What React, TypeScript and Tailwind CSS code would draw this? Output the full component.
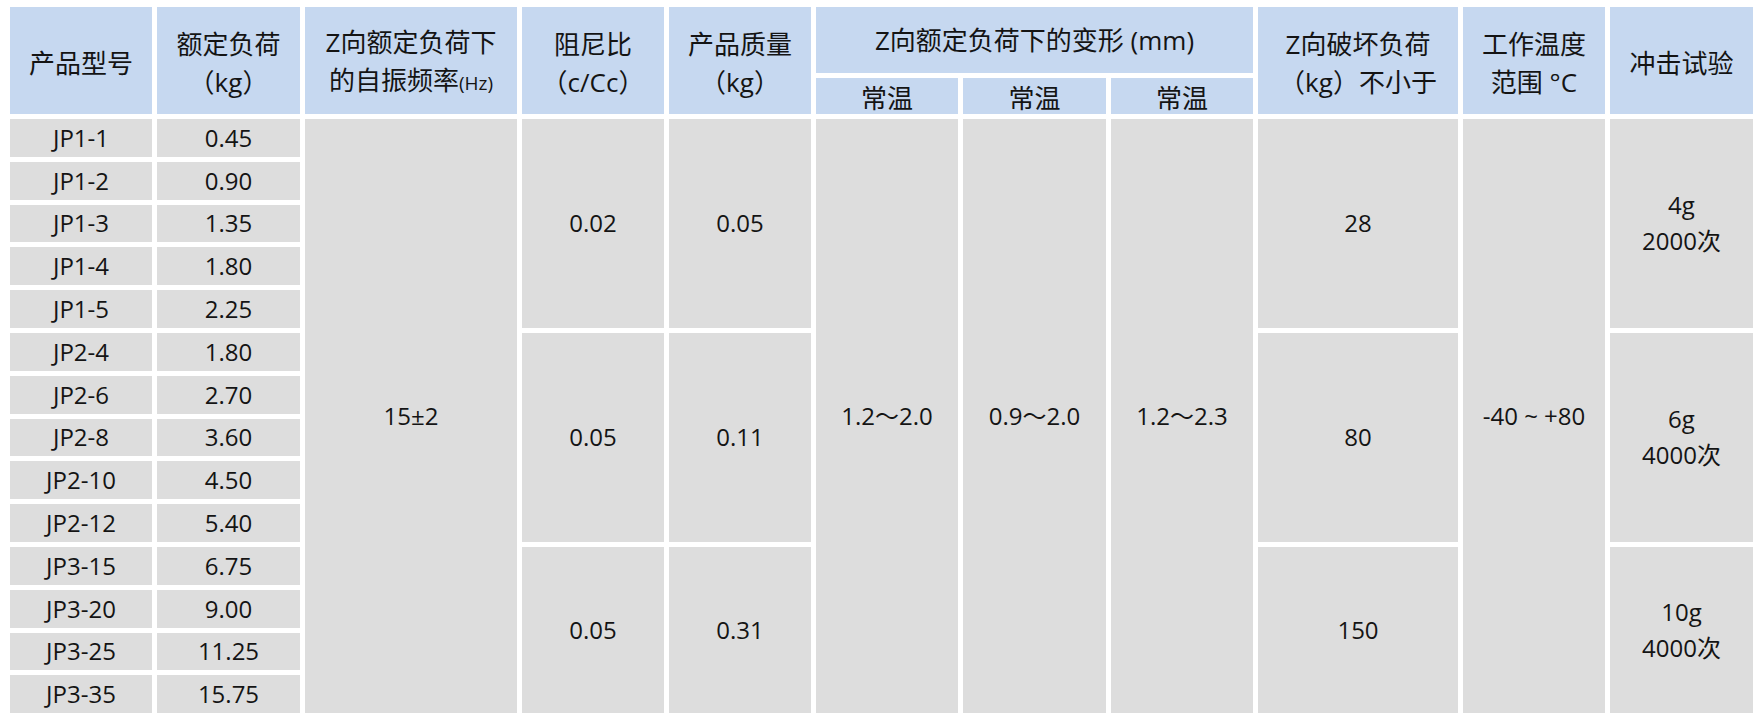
import React from "react"

const models = [
    ["JP1-1", "0.45"],
    ["JP1-2", "0.90"],
    ["JP1-3", "1.35"],
    ["JP1-4", "1.80"],
    ["JP1-5", "2.25"],
    ["JP2-4", "1.80"],
    ["JP2-6", "2.70"],
    ["JP2-8", "3.60"],
    ["JP2-10", "4.50"],
    ["JP2-12", "5.40"],
    ["JP3-15", "6.75"],
    ["JP3-20", "9.00"],
    ["JP3-25", "11.25"],
    ["JP3-35", "15.75"],
]

const head = "flex flex-col items-center justify-center bg-[#c6d8f0] text-center text-[26px] leading-[38px] pt-[4px]"
const cell = "flex flex-col items-center justify-center bg-[#dddddd] text-center text-[24px] leading-[36px]"

export default function App() {
    return (
        <div className="min-h-screen bg-white pl-[10px] pt-[7px] text-[#141414] font-['Open_Sans','Noto_Sans_CJK_SC',sans-serif]">
            <div className="grid grid-cols-[142px_143px_212px_142px_142px_142px_143px_142px_200px_142px_143px] grid-rows-[66px_36px_repeat(14,37.8px)] gap-[5px]">
                {/* 表头 */}
                <div className={`${head} row-span-2`}>产品型号</div>
                <div className={`${head} row-span-2`}>
                    <span>额定负荷</span>
                    <span>（kg）</span>
                </div>
                <div className={`${head} row-span-2`}>
                    <span>Z向额定负荷下</span>
                    <span>
                        的自振频率<span className="text-[19px]">(Hz)</span>
                    </span>
                </div>
                <div className={`${head} row-span-2`}>
                    <span>阻尼比</span>
                    <span>（c/Cc）</span>
                </div>
                <div className={`${head} row-span-2`}>
                    <span>产品质量</span>
                    <span>（kg）</span>
                </div>
                <div className={`${head} col-span-3 !pt-0`}>Z向额定负荷下的变形 (mm)</div>
                <div className={`${head} row-span-2`}>
                    <span>Z向破坏负荷</span>
                    <span>（kg）不小于</span>
                </div>
                <div className={`${head} row-span-2`}>
                    <span>工作温度</span>
                    <span>范围 °C</span>
                </div>
                <div className={`${head} row-span-2`}>冲击试验</div>
                <div className={`${head} leading-[32px]`}>常温</div>
                <div className={`${head} leading-[32px]`}>常温</div>
                <div className={`${head} leading-[32px]`}>常温</div>

                {/* 数据 */}
                {models.map(([name, load], i) => (
                    <React.Fragment key={name}>
                        <div className={cell}>{name}</div>
                        <div className={cell}>{load}</div>
                        {i === 0 && (
                            <>
                                <div className={`${cell} row-span-14`}>15±2</div>
                                <div className={`${cell} row-span-5`}>0.02</div>
                                <div className={`${cell} row-span-5`}>0.05</div>
                                <div className={`${cell} row-span-14`}>1.2～2.0</div>
                                <div className={`${cell} row-span-14`}>0.9～2.0</div>
                                <div className={`${cell} row-span-14`}>1.2～2.3</div>
                                <div className={`${cell} row-span-5`}>28</div>
                                <div className={`${cell} row-span-14`}>-40 ~ +80</div>
                                <div className={`${cell} row-span-5`}>
                                    <span>4g</span>
                                    <span>2000次</span>
                                </div>
                            </>
                        )}
                        {i === 5 && (
                            <>
                                <div className={`${cell} col-start-4 row-span-5`}>0.05</div>
                                <div className={`${cell} row-span-5`}>0.11</div>
                                <div className={`${cell} col-start-9 row-span-5`}>80</div>
                                <div className={`${cell} col-start-11 row-span-5`}>
                                    <span>6g</span>
                                    <span>4000次</span>
                                </div>
                            </>
                        )}
                        {i === 10 && (
                            <>
                                <div className={`${cell} col-start-4 row-span-4`}>0.05</div>
                                <div className={`${cell} row-span-4`}>0.31</div>
                                <div className={`${cell} col-start-9 row-span-4`}>150</div>
                                <div className={`${cell} col-start-11 row-span-4`}>
                                    <span>10g</span>
                                    <span>4000次</span>
                                </div>
                            </>
                        )}
                    </React.Fragment>
                ))}
            </div>
        </div>
    )
}
